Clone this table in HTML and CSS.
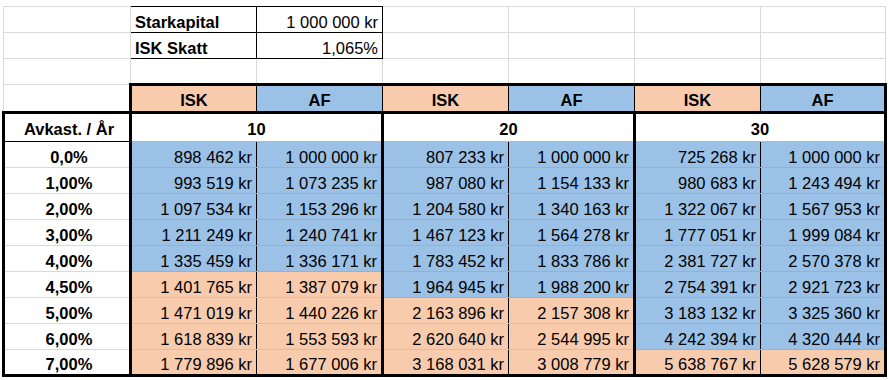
FILE: index.html
```html
<!DOCTYPE html>
<html lang="sv">
<head>
<meta charset="utf-8">
<title>ISK vs AF</title>
<link rel="stylesheet" href="styles.css">
</head>
<body>
<table class="sheet">
  <colgroup>
    <col class="c-a"><col class="c-n"><col class="c-n"><col class="c-n"><col class="c-n"><col class="c-n"><col class="c-g">
  </colgroup>
  <tbody>
    <tr class="r-top">
      <td></td>
      <td class="box lbl">Starkapital</td>
      <td class="box num">1 000 000 kr</td>
      <td></td><td></td><td></td><td></td>
    </tr>
    <tr class="r-top">
      <td></td>
      <td class="box lbl">ISK Skatt</td>
      <td class="box num">1,065%</td>
      <td></td><td></td><td></td><td></td>
    </tr>
    <tr class="r-top">
      <td></td><td></td><td></td><td></td><td></td><td></td><td></td>
    </tr>
    <tr class="r-head">
      <td></td>
      <td class="hd p first">ISK</td>
      <td class="hd b">AF</td>
      <td class="hd p">ISK</td>
      <td class="hd b">AF</td>
      <td class="hd p">ISK</td>
      <td class="hd b last">AF</td>
    </tr>
    <tr class="r-year">
      <td class="corner">Avkast. / År</td>
      <td class="year" colspan="2">10</td>
      <td class="year" colspan="2">20</td>
      <td class="year" colspan="2">30</td>
    </tr>
    <tr class="r-data">
      <td class="rl">0,0%</td>
      <td class="v isk b">898 462 kr</td><td class="v af b">1 000 000 kr</td>
      <td class="v isk b">807 233 kr</td><td class="v af b">1 000 000 kr</td>
      <td class="v isk b">725 268 kr</td><td class="v af b">1 000 000 kr</td>
    </tr>
    <tr class="r-data">
      <td class="rl">1,00%</td>
      <td class="v isk b">993 519 kr</td><td class="v af b">1 073 235 kr</td>
      <td class="v isk b">987 080 kr</td><td class="v af b">1 154 133 kr</td>
      <td class="v isk b">980 683 kr</td><td class="v af b">1 243 494 kr</td>
    </tr>
    <tr class="r-data">
      <td class="rl">2,00%</td>
      <td class="v isk b">1 097 534 kr</td><td class="v af b">1 153 296 kr</td>
      <td class="v isk b">1 204 580 kr</td><td class="v af b">1 340 163 kr</td>
      <td class="v isk b">1 322 067 kr</td><td class="v af b">1 567 953 kr</td>
    </tr>
    <tr class="r-data">
      <td class="rl">3,00%</td>
      <td class="v isk b">1 211 249 kr</td><td class="v af b">1 240 741 kr</td>
      <td class="v isk b">1 467 123 kr</td><td class="v af b">1 564 278 kr</td>
      <td class="v isk b">1 777 051 kr</td><td class="v af b">1 999 084 kr</td>
    </tr>
    <tr class="r-data">
      <td class="rl">4,00%</td>
      <td class="v isk b">1 335 459 kr</td><td class="v af b">1 336 171 kr</td>
      <td class="v isk b">1 783 452 kr</td><td class="v af b">1 833 786 kr</td>
      <td class="v isk b">2 381 727 kr</td><td class="v af b">2 570 378 kr</td>
    </tr>
    <tr class="r-data">
      <td class="rl">4,50%</td>
      <td class="v isk p">1 401 765 kr</td><td class="v af p">1 387 079 kr</td>
      <td class="v isk b">1 964 945 kr</td><td class="v af b">1 988 200 kr</td>
      <td class="v isk b">2 754 391 kr</td><td class="v af b">2 921 723 kr</td>
    </tr>
    <tr class="r-data">
      <td class="rl">5,00%</td>
      <td class="v isk p">1 471 019 kr</td><td class="v af p">1 440 226 kr</td>
      <td class="v isk p">2 163 896 kr</td><td class="v af p">2 157 308 kr</td>
      <td class="v isk b">3 183 132 kr</td><td class="v af b">3 325 360 kr</td>
    </tr>
    <tr class="r-data">
      <td class="rl">6,00%</td>
      <td class="v isk p">1 618 839 kr</td><td class="v af p">1 553 593 kr</td>
      <td class="v isk p">2 620 640 kr</td><td class="v af p">2 544 995 kr</td>
      <td class="v isk b">4 242 394 kr</td><td class="v af b">4 320 444 kr</td>
    </tr>
    <tr class="r-data r-last">
      <td class="rl">7,00%</td>
      <td class="v isk p">1 779 896 kr</td><td class="v af p">1 677 006 kr</td>
      <td class="v isk p">3 168 031 kr</td><td class="v af p">3 008 779 kr</td>
      <td class="v isk p">5 638 767 kr</td><td class="v af p">5 628 579 kr</td>
    </tr>
  </tbody>
</table>
</body>
</html>
```
FILE: styles.css
```css
html, body {
  margin: 0;
  padding: 0;
  background: #ffffff;
  overflow: hidden;
}

.sheet {
  border-collapse: collapse;
  table-layout: fixed;
  margin: 6px 0 0 2px;
  font-family: "Liberation Sans", Arial, sans-serif;
  font-size: 16.5px;
  line-height: 18px;
  color: #000;
}

.c-a { width: 127px; }
.c-n { width: 126px; }
.c-g { width: 125px; }

.sheet td {
  border: 1px solid #dadada;
  padding: 0 4px 1px 4px;
  vertical-align: bottom;
  white-space: nowrap;
  overflow: hidden;
}

.r-top { height: 26px; }
.r-head { height: 28px; }
.r-year { height: 29px; }
.r-data { height: 26px; }

/* small input table */
.sheet td.box {
  border: 1px solid #000;
}
.lbl {
  font-weight: bold;
  padding-left: 5px;
}
.num {
  text-align: right;
}

/* fills */
.b { background: #9bc2e6; }
.p { background: #f8cbad; }

/* header row */
.sheet td.hd {
  font-weight: bold;
  text-align: center;
  border-top: 3px solid #000;
  border-bottom: 3px solid #000;
  border-right: 1px solid #000;
  padding-bottom: 2px;
}
.sheet td.hd.first { border-left: 3px solid #000; }
.sheet td.hd.last { border-right: 3px solid #000; }

/* year row */
.sheet td.corner {
  font-weight: bold;
  text-align: center;
  padding-left: 8px;
  border-top: 3px solid #000;
  border-left: 3px solid #000;
  border-right: 3px solid #000;
  border-bottom: 1px solid #000;
  padding-bottom: 3px;
}
.sheet td.year {
  font-weight: bold;
  text-align: center;
  background: #fff;
  border-top: 3px solid #000;
  border-left: 3px solid #000;
  border-right: 3px solid #000;
  border-bottom: 1px solid #9bc2e6;
  padding-bottom: 3px;
}

/* data rows */
.sheet td.rl {
  font-weight: bold;
  text-align: center;
  padding-left: 8px;
  border-left: 3px solid #000;
  border-right: 3px solid #000;
  border-bottom: 1px solid #dadada;
}
.sheet td.v {
  text-align: right;
}
.sheet td.v.b { border-bottom: 1px solid #8fb3d6; }
.sheet td.v.p { border-bottom: 1px solid #e4bb9f; }
.sheet td.isk { border-right: 1px solid #000; }
.sheet td.af { border-right: 3px solid #000; }

.r-last td,
.sheet .r-last td.v.b,
.sheet .r-last td.v.p,
.sheet .r-last td.rl {
  border-bottom: 3px solid #000;
}
```
